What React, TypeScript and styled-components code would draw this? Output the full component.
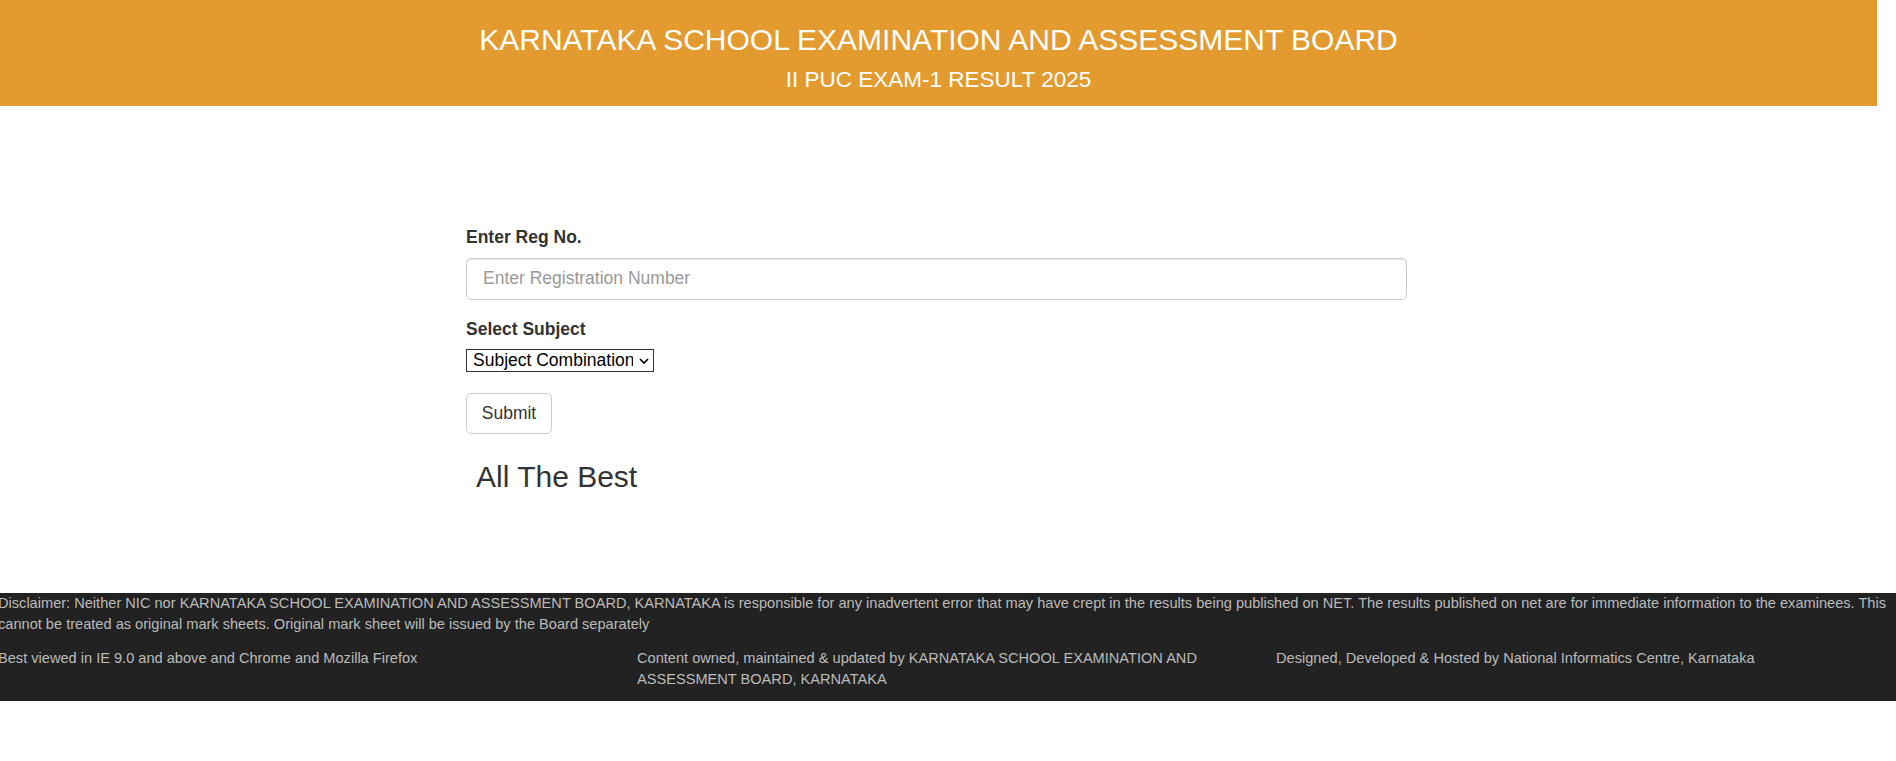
import React from "react";
import styled, { createGlobalStyle } from "styled-components";

const GlobalStyle = createGlobalStyle`
  * { box-sizing: border-box; }
  html, body { margin: 0; padding: 0; background: #fff; overflow: hidden; }
  body {
    font-family: "Liberation Sans", Arial, Helvetica, sans-serif;
    color: #333;
  }
`;

const Header = styled.header`
  width: calc(100% - 19px);
  background: #e39b2f;
  color: #fff;
  text-align: center;
  padding: 24.4px 0 13.6px;
`;

const Title = styled.h1`
  margin: 0 0 11.2px;
  font-size: 30px;
  font-weight: 400;
  line-height: 32.5px;
`;

const Subtitle = styled.h2`
  margin: 0;
  font-size: 22.5px;
  font-weight: 400;
  line-height: 24.5px;
`;

const Main = styled.main`
  width: calc(100% - 23px);
  padding: 119px 0 99.4px;
`;

const Container = styled.div`
  width: 941px;
  margin: 0 auto;
`;

const FormGroup = styled.div<{ $mb?: number }>`
  margin-bottom: ${(p) => (p.$mb ?? 18.75)}px;
`;

const FieldLabel = styled.label<{ $mb?: number }>`
  display: block;
  font-size: 17.5px;
  font-weight: 700;
  line-height: 25px;
  margin-bottom: ${(p) => (p.$mb ?? 7.4)}px;
  color: #333;
`;

const TextInput = styled.input`
  display: block;
  width: 100%;
  height: 42px;
  padding: 6px 16px;
  font-family: inherit;
  font-size: 17.5px;
  color: #555;
  background: #fff;
  border: 1px solid #ccc;
  border-radius: 5px;
  box-shadow: inset 0 1px 1px rgba(0, 0, 0, 0.075);
  outline: none;
  &::placeholder { color: #999; }
`;

const SelectWrap = styled.span`
  position: relative;
  display: inline-block;
`;

const Select = styled.select`
  appearance: none;
  -webkit-appearance: none;
  width: 188px;
  height: 23.5px;
  padding: 0 20px 0 6px;
  margin: 0;
  font-family: inherit;
  font-size: 17.5px;
  line-height: 21px;
  color: #000;
  background: #fff;
  border: 1px solid #333;
  border-radius: 0;
  outline: none;
`;

const Chevron = styled.svg`
  position: absolute;
  right: 5px;
  top: 9px;
  width: 10px;
  height: 6px;
  pointer-events: none;
`;

const SubmitButton = styled.button`
  display: block;
  width: 86px;
  height: 41px;
  padding: 0;
  font-family: inherit;
  font-size: 17.5px;
  color: #333;
  background: #fff;
  border: 1px solid #ccc;
  border-radius: 5px;
  cursor: pointer;
`;

const BestWishes = styled.h3`
  margin: 26.4px 0 0;
  padding-left: 10px;
  font-size: 30px;
  font-weight: 400;
  line-height: 33px;
  color: #333;
`;

const Footer = styled.footer`
  margin-left: -21px;
  width: calc(100% + 21px);
  background: #222;
  color: #bbb;
  font-size: 14.6px;
  line-height: 21.4px;
  padding-bottom: 10.5px;
`;

const Disclaimer = styled.p`
  margin: 0 0 12.5px;
  padding: 0 0 0 19px;
`;

const FooterRow = styled.div`
  display: grid;
  grid-template-columns: repeat(3, 1fr);
`;

const FooterCol = styled.div`
  padding: 0 19px;
`;

export default function App() {
  return (
    <>
      <GlobalStyle />
      <Header>
        <Title>KARNATAKA SCHOOL EXAMINATION AND ASSESSMENT BOARD</Title>
        <Subtitle>II PUC EXAM-1 RESULT 2025</Subtitle>
      </Header>
      <Main>
        <Container>
          <FormGroup $mb={17.65}>
            <FieldLabel htmlFor="regno">Enter Reg No.</FieldLabel>
            <TextInput id="regno" type="text" placeholder="Enter Registration Number" />
          </FormGroup>
          <FormGroup $mb={20.6}>
            <FieldLabel htmlFor="subject" $mb={6.5}>Select Subject</FieldLabel>
            <SelectWrap>
              <Select id="subject" defaultValue="">
                <option value="">Subject Combination</option>
              </Select>
              <Chevron viewBox="0 0 10 6">
                <path d="M1 1 L5 5 L9 1" fill="none" stroke="#000" strokeWidth="1.7" />
              </Chevron>
            </SelectWrap>
          </FormGroup>
          <SubmitButton type="button">Submit</SubmitButton>
          <BestWishes>All The Best</BestWishes>
        </Container>
      </Main>
      <Footer>
        <Disclaimer>
          Disclaimer: Neither NIC nor KARNATAKA SCHOOL EXAMINATION AND ASSESSMENT BOARD, KARNATAKA is responsible for any inadvertent error that may have crept in the results being published on NET. The results published on net are for immediate information to the examinees. This cannot be treated as original mark sheets. Original mark sheet will be issued by the Board separately
        </Disclaimer>
        <FooterRow>
          <FooterCol>Best viewed in IE 9.0 and above and Chrome and Mozilla Firefox</FooterCol>
          <FooterCol>Content owned, maintained &amp; updated by KARNATAKA SCHOOL EXAMINATION AND ASSESSMENT BOARD, KARNATAKA</FooterCol>
          <FooterCol>Designed, Developed &amp; Hosted by National Informatics Centre, Karnataka</FooterCol>
        </FooterRow>
      </Footer>
    </>
  );
}
